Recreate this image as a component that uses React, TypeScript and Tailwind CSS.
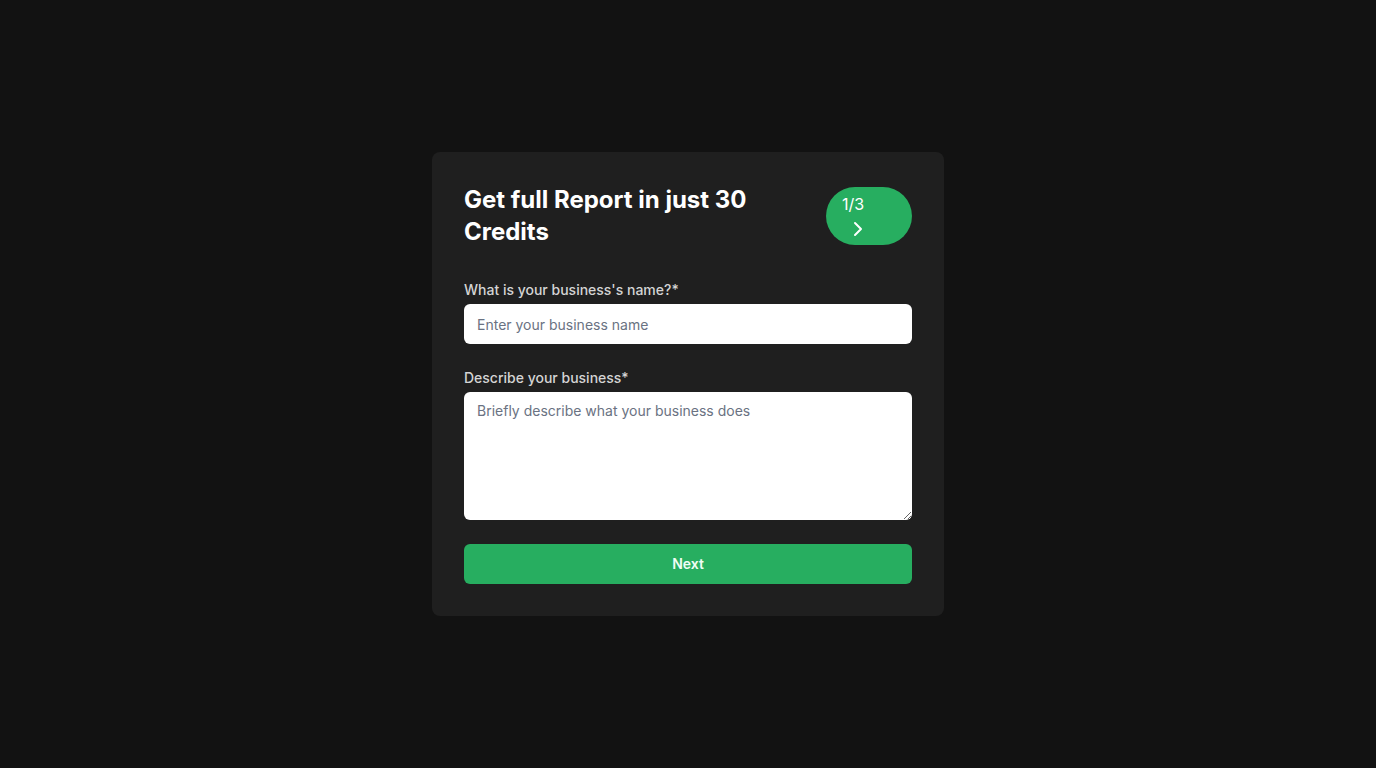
import React from "react";
import { ChevronRight } from "lucide-react";

export default function App() {
  return (
    <div
      className="min-h-screen w-full bg-[#121212] flex items-center justify-center"
      style={{ fontFamily: "Inter, 'Noto Sans', sans-serif" }}
    >
      <div className="w-[512px] rounded-lg bg-[#1f1f1f] p-8">
        <div className="flex items-center justify-between gap-4 mb-8">
          <h1 className="text-2xl leading-8 font-bold text-white max-w-[300px]">
            Get full Report in just 30 Credits
          </h1>
          <button className="w-[86px] h-[58px] shrink-0 rounded-full bg-[#27ae60] px-4 pt-[5px] flex flex-col items-start justify-start text-white">
            <span className="text-base leading-6">1/3</span>
            <ChevronRight className="w-6 h-6 ml-1 mt-px" strokeWidth={2} />
          </button>
        </div>
        <div className="mb-6">
          <label className="block text-sm leading-5 font-medium text-[#d4d4d4] mb-1">
            What is your business's name?*
          </label>
          <input
            type="text"
            placeholder="Enter your business name"
            className="w-full h-10 rounded-md bg-white px-[13px] text-sm text-gray-900 placeholder:text-gray-500 outline-none"
          />
        </div>
        <div className="mb-6">
          <label className="block text-sm leading-5 font-medium text-[#d4d4d4] mb-1">
            Describe your business*
          </label>
          <textarea
            placeholder="Briefly describe what your business does"
            className="block w-full h-32 rounded-md bg-white px-[13px] pt-[9px] pb-2 text-sm leading-5 text-gray-900 placeholder:text-gray-500 outline-none"
          />
        </div>
        <button className="w-full h-10 rounded-md bg-[#27ae60] text-sm font-semibold text-[#f0fdf4]">
          Next
        </button>
      </div>
    </div>
  );
}
